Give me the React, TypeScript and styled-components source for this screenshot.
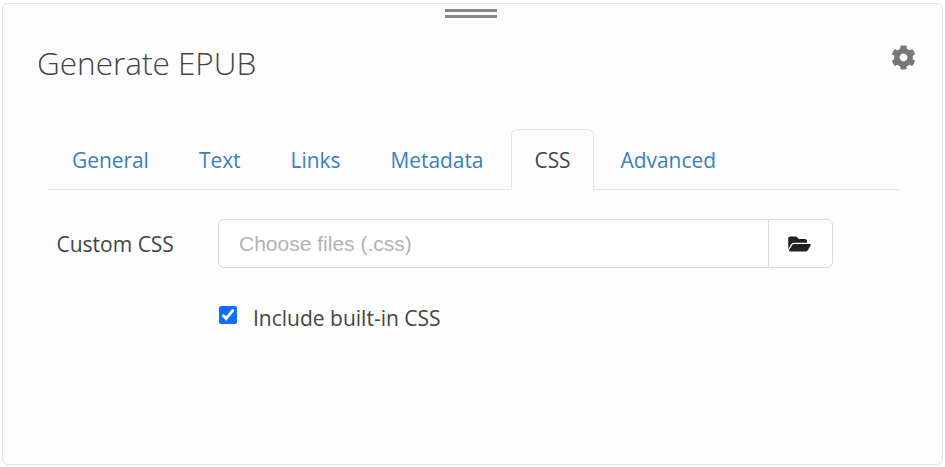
import React from "react";
import styled, { createGlobalStyle } from "styled-components";
import { FaCog, FaFolderOpen } from "react-icons/fa";

const Global = createGlobalStyle`
  html, body { margin: 0; padding: 0; background: #fff; }
  body { font-family: "Open Sans", "Liberation Sans", sans-serif; color: #444; }
  * { box-sizing: border-box; }
`;

const Panel = styled.div`
  position: relative;
  width: 941px;
  height: 462px;
  margin: 3px 0 0 2px;
  background: #fdfdfd;
  border: 1px solid #e3e3e3;
  border-radius: 6px;
  padding: 0 44px 0 34px;
`;

const Handle = styled.div`
  position: absolute;
  top: 5px;
  left: 442px;
  width: 52px;
  height: 9px;
  border-top: 3px solid #888;
  border-bottom: 3px solid #888;
`;

const Header = styled.div`
  display: flex;
  align-items: center;
  justify-content: space-between;
  height: 60px;
  margin-top: 29px;
`;

const Title = styled.h1`
  margin: 0;
  font-size: 31.5px;
  font-weight: 300;
  line-height: 60px;
  color: #444;
`;

const Gear = styled(FaCog)`
  width: 25px;
  height: 25px;
  color: #777;
  margin: -12px -18px 0 0;
`;

const Tabs = styled.div`
  display: flex;
  align-items: flex-end;
  height: 61px;
  margin: 36px 0 0 11px;
  border-bottom: 1px solid #e6e6e6;
  width: 851px;
`;

const Tab = styled.a<{ $active?: boolean }>`
  display: block;
  height: 61px;
  margin: 0 ${(p) => (p.$active ? "2px" : "0")} -1px ${(p) => (p.$active ? "3px" : "0")};
  padding: ${(p) => (p.$active ? "0 22px" : "0 24px")};
  line-height: 60px;
  font-size: 20.9px;
  color: ${(p) => (p.$active ? "#444" : "#3a80bd")};
  background: ${(p) => (p.$active ? "#fdfdfd" : "transparent")};
  border: 1px solid ${(p) => (p.$active ? "#e6e6e6" : "transparent")};
  border-bottom-color: ${(p) => (p.$active ? "#fdfdfd" : "transparent")};
  border-radius: 6px 6px 0 0;

  &:first-child {
    margin-left: -1px;
  }
`;

const Row = styled.div`
  display: flex;
  align-items: center;
  margin-top: 29px;
`;

const Label = styled.label`
  width: 181px;
  padding-left: 19.5px;
  font-size: 21px;
  color: #444;
`;

const InputGroup = styled.div`
  display: flex;
  width: 615px;
  height: 49px;
`;

const TextInput = styled.div`
  flex: 1;
  display: flex;
  align-items: center;
  padding-left: 20px;
  font-family: "Liberation Sans", Arial, sans-serif;
  font-size: 21px;
  color: #b3b3b3;
  background: #fff;
  border: 1px solid #d9d9d9;
  border-right: 0;
  border-radius: 6px 0 0 6px;
`;

const FileButton = styled.div`
  width: 65px;
  display: flex;
  align-items: center;
  justify-content: center;
  padding-right: 2px;
  background: #fff;
  border: 1px solid #d9d9d9;
  border-radius: 0 6px 6px 0;
`;

const Folder = styled(FaFolderOpen)`
  width: 23px;
  height: 20px;
  color: #222;
`;

const CheckRow = styled.label`
  display: flex;
  align-items: center;
  margin: 36px 0 0 182px;
  font-size: 21px;
  color: #444;
`;

const Check = styled.input`
  width: 18px;
  height: 18px;
  margin: -6px 16px 0 0;
  accent-color: #0d6efd;
`;

export default function App() {
  return (
    <>
      <Global />
      <Panel>
        <Handle />
        <Header>
          <Title>Generate EPUB</Title>
          <Gear />
        </Header>
        <Tabs>
          <Tab>General</Tab>
          <Tab>Text</Tab>
          <Tab>Links</Tab>
          <Tab>Metadata</Tab>
          <Tab $active>CSS</Tab>
          <Tab>Advanced</Tab>
        </Tabs>
        <Row>
          <Label>Custom CSS</Label>
          <InputGroup>
            <TextInput>Choose files (.css)</TextInput>
            <FileButton>
              <Folder />
            </FileButton>
          </InputGroup>
        </Row>
        <CheckRow>
          <Check type="checkbox" defaultChecked />
          Include built-in CSS
        </CheckRow>
      </Panel>
    </>
  );
}
